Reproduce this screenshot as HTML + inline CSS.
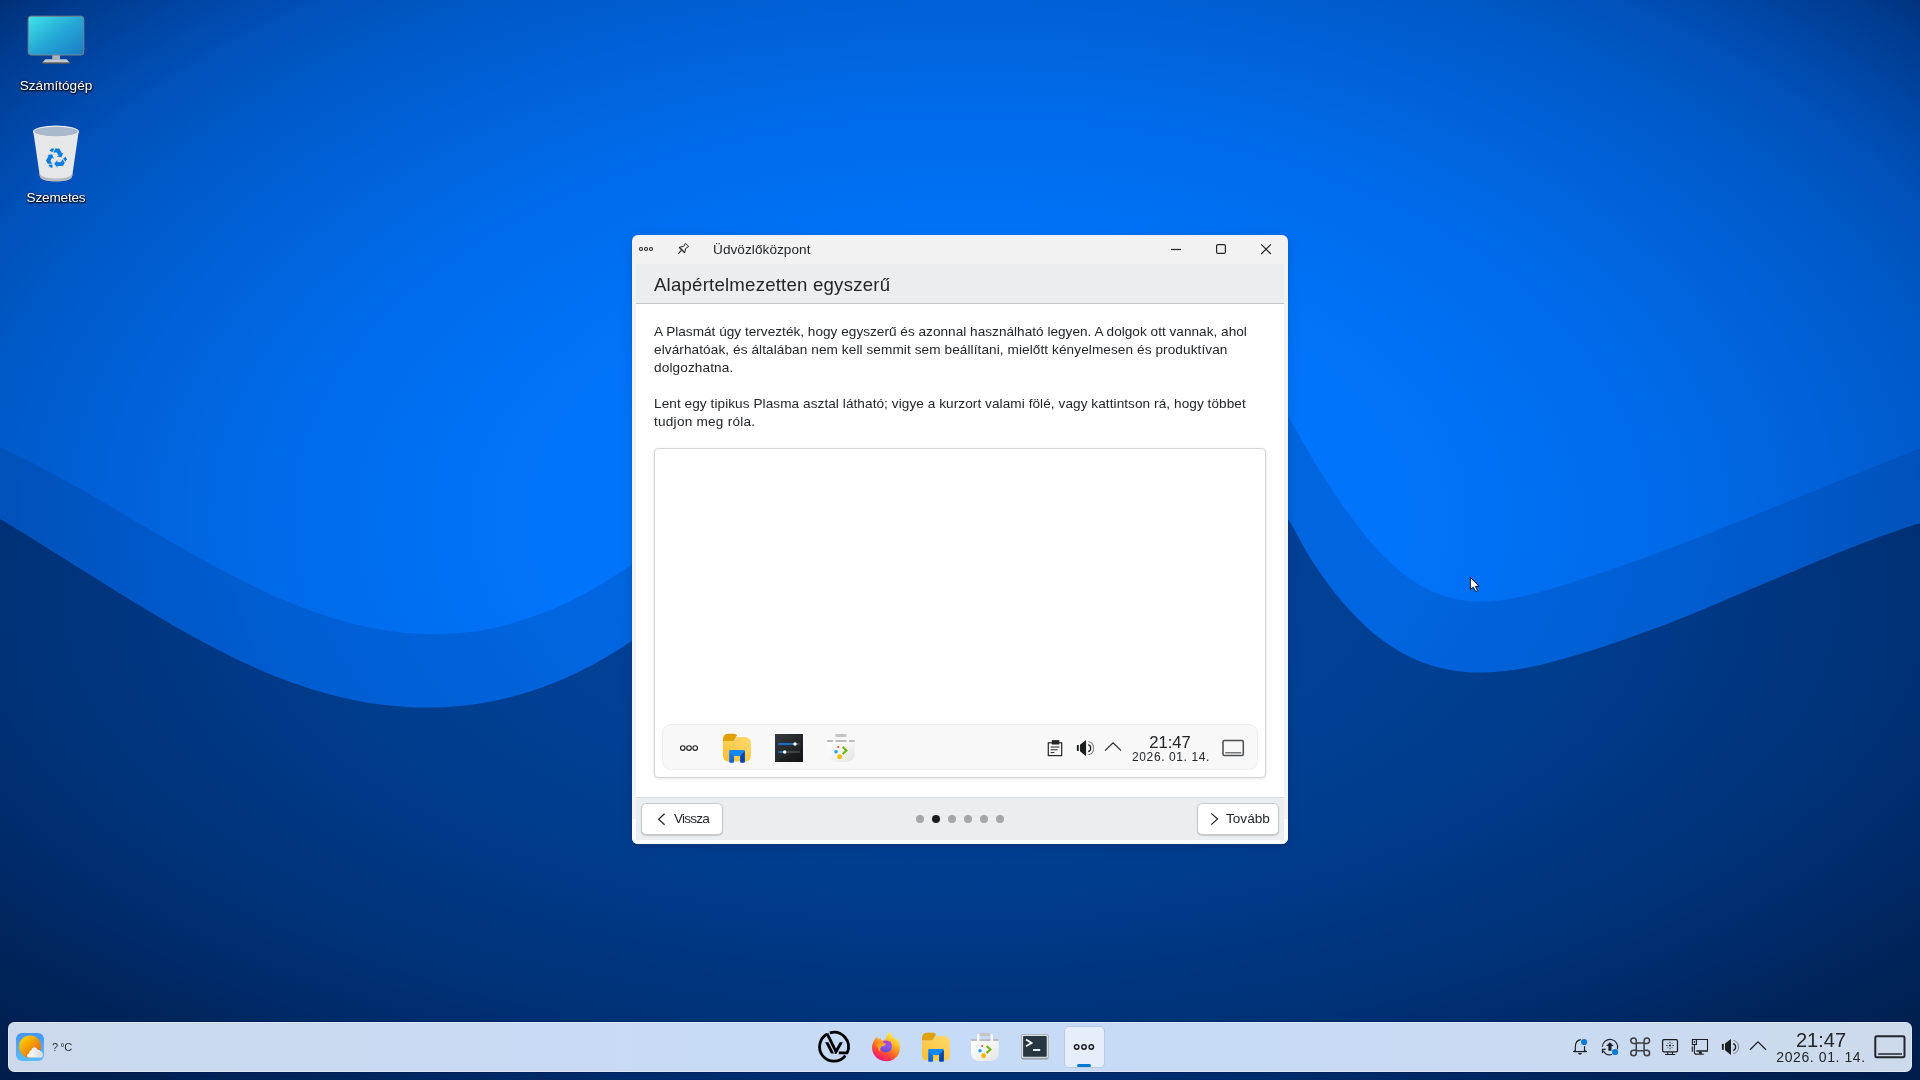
<!DOCTYPE html>
<html lang="hu">
<head>
<meta charset="utf-8">
<title>Üdvözlőközpont</title>
<style>
html,body{margin:0;padding:0;width:1920px;height:1080px;overflow:hidden;background:#003a8c;}
body{position:relative;font-family:"Liberation Sans","DejaVu Sans",sans-serif;color:#232629;-webkit-font-smoothing:antialiased;}
.abs{position:absolute;}
#wall{position:absolute;left:0;top:0;width:1920px;height:1080px;display:block;}
.dlabel{position:absolute;color:#fff;font-size:13.6px;line-height:18px;text-align:center;white-space:nowrap;text-shadow:0 1px 2px rgba(0,0,0,.9),0 0 3px rgba(0,0,0,.7),1px 1px 1px rgba(0,0,0,.6);}
/* window */
#win{position:absolute;left:632px;top:235px;width:656px;height:609px;border-radius:6px;background:#f2f2f2;box-shadow:0 3px 14px rgba(0,0,0,.10),0 1px 3px rgba(0,0,0,.10);overflow:hidden;}
#win .botfill{position:absolute;left:0;top:584px;width:656px;height:25px;background:#fdfdfd;}
#titletxt{position:absolute;left:81.2px;top:5.6px;font-size:13.6px;line-height:18px;letter-spacing:.06px;white-space:nowrap;color:#232629;}
#hdr{position:absolute;left:4px;top:29px;width:648px;height:39px;background:#eaeef1;}
#hdrline{position:absolute;left:4px;top:68px;width:648px;height:1px;background:#c4c8cb;}
#heading{position:absolute;left:22.3px;top:38px;font-size:18.6px;line-height:24px;letter-spacing:.22px;white-space:nowrap;color:#232629;}
#content{position:absolute;left:4px;top:69px;width:648px;height:493px;background:#fff;}
.ln{position:absolute;left:22.4px;font-size:13.6px;line-height:18px;white-space:nowrap;color:#232629;}
#card{position:absolute;left:22px;top:213px;width:610px;height:328px;border:1px solid #d3d4d5;border-radius:4px;background:#fff;box-shadow:0 1px 3px rgba(0,0,0,.10);}
#mpanel{position:absolute;left:30px;top:489px;width:594px;height:44px;border:1px solid #ececec;border-radius:9px;background:#f8f8f8;}
#ftline{position:absolute;left:4px;top:562px;width:648px;height:1px;background:#d9dcde;}
#footer{position:absolute;left:4px;top:563px;width:648px;height:42px;background:#eaeef1;}
.btn{position:absolute;top:568px;height:30px;border:1px solid #c6c9cb;border-radius:5px;background:#fff;box-shadow:0 1px 1px rgba(0,0,0,.16);}
.btn span{position:absolute;top:6px;font-size:13.6px;line-height:18px;white-space:nowrap;color:#232629;}
.dot{position:absolute;top:580px;width:8px;height:8px;border-radius:50%;background:#a4a8ab;}
/* bottom panel */
#panel{position:absolute;left:8px;top:1022px;width:1904px;height:50px;border-radius:6.5px;box-shadow:inset 0 0 0 1px rgba(255,255,255,.32),0 0 0 1px rgba(0,10,50,.22);background:linear-gradient(90deg,#ccd9ec 0%,#c9daf3 25%,#c6dbf7 50%,#c9daf2 78%,#cddaec 100%);}
#task{position:absolute;left:1063.5px;top:1026px;width:41px;height:41.5px;border:1px solid #bccadf;border-radius:5px;background:#e6eefb;box-sizing:border-box;}
#taskind{position:absolute;left:1077px;top:1064px;width:14px;height:3px;border-radius:1.5px;background:#0078d4;}
#temp{position:absolute;left:51.5px;top:1039px;font-size:11px;line-height:16px;letter-spacing:-.45px;white-space:nowrap;color:#2a2e32;}
#clock{position:absolute;left:1771px;top:1029px;width:100px;text-align:center;font-size:20px;line-height:22px;white-space:nowrap;color:#232629;}
#date{position:absolute;left:1761.3px;top:1048.9px;width:120px;text-align:center;font-size:14px;line-height:16px;letter-spacing:.58px;white-space:nowrap;color:#232629;}
#mclock{position:absolute;left:1120.2px;top:732.8px;width:100px;text-align:center;font-size:16.6px;line-height:20px;white-space:nowrap;color:#232629;}
#mdate{position:absolute;left:1110.5px;top:749px;width:120px;text-align:center;font-size:12px;line-height:16px;letter-spacing:.6px;white-space:nowrap;color:#232629;}
svg{overflow:visible}
.ln,#titletxt,#heading,.btn span,#temp,#clock,#date,#mclock,#mdate,.dlabel{will-change:transform;}
</style>
</head>
<body>
<!-- WALLPAPER -->
<svg id="wall" viewBox="0 0 1920 1080">
<defs>
<radialGradient id="g1" gradientUnits="userSpaceOnUse" cx="0" cy="0" r="1" gradientTransform="translate(970 520) scale(1485 880)">
<stop offset="0.0000" stop-color="#0078ff"/><stop offset="0.2909" stop-color="#0074fa"/><stop offset="0.4818" stop-color="#006ae8"/><stop offset="0.5818" stop-color="#0061d8"/><stop offset="0.6818" stop-color="#0058c4"/><stop offset="0.7364" stop-color="#0050b8"/><stop offset="0.7818" stop-color="#0047a6"/><stop offset="0.8364" stop-color="#003c90"/><stop offset="0.9000" stop-color="#002c6c"/><stop offset="1.0000" stop-color="#002358"/>
</radialGradient>
<radialGradient id="g2" gradientUnits="userSpaceOnUse" cx="0" cy="0" r="1" gradientTransform="translate(950 600) scale(1560 720)">
<stop offset="0.0000" stop-color="#0046a0"/><stop offset="0.1923" stop-color="#004298"/><stop offset="0.3846" stop-color="#003d8e"/><stop offset="0.5000" stop-color="#003783"/><stop offset="0.6154" stop-color="#003176"/><stop offset="0.6923" stop-color="#002b6a"/><stop offset="0.7692" stop-color="#00255c"/><stop offset="0.8462" stop-color="#002050"/><stop offset="0.9231" stop-color="#001c48"/><stop offset="1.0000" stop-color="#001a44"/>
</radialGradient>
</defs>
<rect width="1920" height="1080" fill="url(#g1)"/>
<path id="band" d="M0.0,447.4 C4.0,449.3 7.8,451.0 12.0,453.0 C16.2,455.0 20.3,457.0 25.0,459.3 C29.7,461.6 34.2,463.9 40.0,467.0 C45.8,470.0 51.7,473.1 60.0,477.7 C68.3,482.3 78.3,487.9 90.0,494.6 C101.7,501.3 115.0,509.2 130.0,517.9 C145.0,526.7 163.3,537.6 180.0,547.0 C196.7,556.4 213.3,565.8 230.0,574.4 C246.7,583.0 263.3,591.2 280.0,598.4 C296.7,605.5 313.3,612.0 330.0,617.2 C346.7,622.4 363.3,626.6 380.0,629.4 C396.7,632.2 413.3,633.9 430.0,634.1 C446.7,634.3 463.3,633.1 480.0,630.4 C496.7,627.7 513.3,623.5 530.0,617.8 C546.7,612.1 563.0,605.1 580.0,596.3 C597.0,587.4 602.0,584.2 632.0,564.5 C662.0,544.8 715.3,509.6 760.0,478.0 C804.7,446.4 853.3,403.8 900.0,375.0 C946.7,346.2 1000.0,317.5 1040.0,305.0 C1080.0,292.5 1111.7,295.8 1140.0,300.0 C1168.3,304.2 1190.8,317.5 1210.0,330.0 C1229.2,342.5 1242.0,360.5 1255.0,375.0 C1268.0,389.5 1278.8,403.6 1288.0,416.9 C1297.2,430.1 1302.2,441.5 1310.0,454.4 C1317.8,467.3 1326.7,481.7 1335.0,494.1 C1343.3,506.5 1351.7,518.4 1360.0,529.0 C1368.3,539.6 1376.7,549.2 1385.0,557.5 C1393.3,565.8 1401.7,572.9 1410.0,578.8 C1418.3,584.7 1425.8,589.1 1435.0,592.8 C1444.2,596.4 1454.2,599.4 1465.0,600.7 C1475.8,601.9 1487.5,601.9 1500.0,600.4 C1512.5,599.0 1525.0,596.0 1540.0,592.1 C1555.0,588.1 1571.7,582.7 1590.0,576.6 C1608.3,570.6 1630.0,563.0 1650.0,555.7 C1670.0,548.4 1690.0,540.7 1710.0,532.9 C1730.0,525.1 1750.0,517.0 1770.0,508.9 C1790.0,500.9 1811.7,492.0 1830.0,484.6 C1848.3,477.1 1868.3,469.1 1880.0,464.4 C1891.7,459.8 1894.7,458.6 1900.0,456.5 C1905.3,454.4 1908.7,453.1 1912.0,451.8 C1915.3,450.5 1917.3,449.8 1920.0,448.7 L1920,1080 L0,1080Z" fill="#002c78" fill-opacity=".20"/>
<path id="low" d="M0.0,519.0 C4.0,521.4 7.8,523.7 12.0,526.2 C16.2,528.7 20.3,531.3 25.0,534.1 C29.7,537.0 34.2,539.8 40.0,543.4 C45.8,547.0 51.7,550.7 60.0,555.9 C68.3,561.1 78.3,567.5 90.0,574.8 C101.7,582.1 115.0,590.6 130.0,599.7 C145.0,608.7 163.3,619.9 180.0,629.3 C196.7,638.7 213.3,647.8 230.0,655.9 C246.7,664.0 263.3,671.6 280.0,678.1 C296.7,684.5 313.3,690.1 330.0,694.5 C346.7,698.9 363.3,702.3 380.0,704.5 C396.7,706.7 413.3,707.8 430.0,707.6 C446.7,707.4 463.3,706.1 480.0,703.4 C496.7,700.7 513.3,696.8 530.0,691.5 C546.7,686.1 563.0,679.7 580.0,671.3 C597.0,662.9 602.0,659.9 632.0,641.0 C662.0,622.2 715.3,588.2 760.0,558.0 C804.7,527.8 853.3,487.2 900.0,460.0 C946.7,432.8 1000.0,406.3 1040.0,395.0 C1080.0,383.7 1111.7,387.0 1140.0,392.0 C1168.3,397.0 1190.8,411.2 1210.0,425.0 C1229.2,438.8 1242.0,459.3 1255.0,475.0 C1268.0,490.7 1278.8,505.5 1288.0,519.2 C1297.2,533.0 1302.2,545.1 1310.0,557.4 C1317.8,569.7 1326.7,582.4 1335.0,593.0 C1343.3,603.5 1351.7,612.7 1360.0,620.9 C1368.3,629.1 1376.7,636.0 1385.0,642.0 C1393.3,648.0 1401.7,652.9 1410.0,657.0 C1418.3,661.0 1425.8,664.0 1435.0,666.5 C1444.2,669.0 1454.2,671.1 1465.0,672.0 C1475.8,672.8 1487.5,672.8 1500.0,671.6 C1512.5,670.4 1525.0,668.3 1540.0,664.9 C1555.0,661.4 1571.7,656.9 1590.0,651.1 C1608.3,645.3 1630.0,637.7 1650.0,630.3 C1670.0,622.8 1690.0,614.6 1710.0,606.4 C1730.0,598.2 1750.0,589.5 1770.0,581.1 C1790.0,572.7 1811.7,563.5 1830.0,556.2 C1848.3,548.8 1868.3,541.2 1880.0,536.8 C1891.7,532.4 1894.7,531.6 1900.0,529.7 C1905.3,527.8 1908.7,526.8 1912.0,525.6 C1915.3,524.5 1917.3,523.9 1920.0,523.0 L1920,1080 L0,1080Z" fill="url(#g2)"/>
</svg>

<!-- DESKTOP ICONS -->
<div class="dlabel" style="left:6px;top:77px;width:100px;">Számítógép</div>
<div class="dlabel" style="left:5.8px;top:189px;width:100px;letter-spacing:-.19px">Szemetes</div>

<!-- WINDOW -->
<div id="win">
<div class="botfill"></div>
<div id="titletxt">Üdvözlőközpont</div>
<div id="hdr"></div><div id="hdrline"></div>
<div id="heading">Alapértelmezetten egyszerű</div>
<div id="content"></div>
<div class="ln" style="top:87.6px;letter-spacing:.02px">A Plasmát úgy tervezték, hogy egyszerű és azonnal használható legyen. A dolgok ott vannak, ahol</div>
<div class="ln" style="top:105.6px;letter-spacing:.09px">elvárhatóak, és általában nem kell semmit sem beállítani, mielőtt kényelmesen és produktívan</div>
<div class="ln" style="top:123.6px;letter-spacing:.13px">dolgozhatna.</div>
<div class="ln" style="top:159.6px;letter-spacing:.07px">Lent egy tipikus Plasma asztal látható; vigye a kurzort valami fölé, vagy kattintson rá, hogy többet</div>
<div class="ln" style="top:177.6px;letter-spacing:.24px">tudjon meg róla.</div>
<div id="card"></div>
<div id="mpanel"></div>
<div id="ftline"></div><div id="footer"></div>
<div class="btn" style="left:9px;width:80px;"><span style="left:32px;letter-spacing:-.78px">Vissza</span></div>
<div class="btn" style="left:565px;width:80px;"><span style="left:28.2px">Tovább</span></div>
<div class="dot" style="left:284px"></div>
<div class="dot" style="left:300px;background:#1b1e20"></div>
<div class="dot" style="left:316px"></div>
<div class="dot" style="left:332px"></div>
<div class="dot" style="left:348px"></div>
<div class="dot" style="left:364px"></div>
</div>
<div id="mclock">21:47</div>
<div id="mdate">2026. 01. 14.</div>

<!-- PANEL -->
<div id="panel"></div>
<div id="task"></div><div id="taskind"></div>
<div id="temp">? °C</div>
<div id="clock">21:47</div>
<div id="date">2026. 01. 14.</div>
<svg id="ov" class="abs" style="left:0;top:0" width="1920" height="1080" viewBox="0 0 1920 1080">
<defs>
<linearGradient id="fold" x1="0" y1="1" x2="1" y2="0"><stop offset="0" stop-color="#ffbf30"/><stop offset="1" stop-color="#ffd96e"/></linearGradient>
<linearGradient id="gateL" x1="0" y1="0" x2="0" y2="1"><stop offset="0" stop-color="#0f84ff"/><stop offset="1" stop-color="#0a5fd0"/></linearGradient>
<linearGradient id="bag" x1="0" y1="0" x2="1" y2="1"><stop offset="0" stop-color="#ffffff"/><stop offset=".45" stop-color="#f6f6f6"/><stop offset="1" stop-color="#e4e4e4"/></linearGradient>
<linearGradient id="sett" x1="0" y1="0" x2="1" y2="1"><stop offset="0" stop-color="#34383c"/><stop offset="1" stop-color="#17191b"/></linearGradient>
<linearGradient id="wbg" x1="0" y1="0" x2="0" y2="1"><stop offset="0" stop-color="#4596ff"/><stop offset="1" stop-color="#5cbcff"/></linearGradient>
<linearGradient id="sun" x1="0.15" y1="0.1" x2="0.85" y2="0.9"><stop offset="0" stop-color="#ffcf00"/><stop offset="1" stop-color="#e86200"/></linearGradient>
<linearGradient id="cloud" x1="0" y1="0" x2="1" y2="0"><stop offset="0" stop-color="#ffffff"/><stop offset="1" stop-color="#d9d9d9"/></linearGradient>
<linearGradient id="scr" x1="0" y1="0" x2="1" y2="1"><stop offset="0" stop-color="#42e4ea"/><stop offset=".5" stop-color="#24a8d6"/><stop offset="1" stop-color="#1a7cc6"/></linearGradient>
<linearGradient id="ffb" x1="0.8" y1="0.05" x2="0.3" y2="1"><stop offset="0" stop-color="#fff44f"/><stop offset=".3" stop-color="#ffbd2e"/><stop offset=".55" stop-color="#ff7a1f"/><stop offset=".8" stop-color="#ff3647"/><stop offset="1" stop-color="#e31587"/></linearGradient>
<linearGradient id="ffg" x1="0.6" y1="0" x2="0.35" y2="1"><stop offset="0" stop-color="#b833e1"/><stop offset=".45" stop-color="#9059ff"/><stop offset="1" stop-color="#5b49c8"/></linearGradient>
<linearGradient id="ffs" x1="0" y1="0" x2="1" y2="0.6"><stop offset="0" stop-color="#ff8a16"/><stop offset="1" stop-color="#ffb628"/></linearGradient>
<!-- folder 40-box -->
<g id="folder">
<path d="M8,13.5 V11.2 Q8,5.7 13.5,5.7 H19.2 Q21.2,5.7 22,7.2 L18.4,13.6Z" fill="#e0a000"/>
<path d="M8,13.4 H17.2 Q18.6,13.4 19.4,12.2 L20.6,10.2 Q21.4,9 22.8,9 H29.4 Q36,9 36,15.6 V27.4 Q36,33.6 29.8,33.6 H14.2 Q8,33.6 8,27.4Z" fill="url(#fold)"/>
<path d="M14.2,23 Q14.2,22 15.2,22 H28.9 Q29.9,22 29.9,23 L25.1,27.9 H19Z" fill="#1188ff"/>
<path d="M14.2,22.8 L19,27.7 V33.8 Q19,34.8 18,34.8 H15.2 Q14.2,34.8 14.2,33.8Z" fill="url(#gateL)"/>
<path d="M29.9,22.8 L25.1,27.7 V33.8 Q25.1,34.8 26.1,34.8 H28.9 Q29.9,34.8 29.9,33.8Z" fill="#0043b4"/>
</g>
<!-- discover 40-box -->
<g id="disc">
<rect x="15" y="6.1" width="11.7" height="2.8" rx=".6" fill="#c4c4c4"/>
<path d="M13,14.5 V8.8 Q13,7 15.5,6.6 V14.5Z M29,14.5 V8.8 Q29,7 26.5,6.6 V14.5Z" fill="#f6f6f6"/>
<path d="M7,12 H34.8 V25.6 Q34.8,33.9 26.4,33.9 H15.4 Q7,33.9 7,25.6Z" fill="url(#bag)"/>
<path d="M7,12 H13 V14 H7Z M15.5,12 H26.5 V14 H15.5Z M29,12 H34.8 V14 H29Z" fill="#bdbdbd"/>
<rect x="17.3" y="18" width="1.9" height="2" rx=".4" fill="#f05a3c"/>
<circle cx="16" cy="23.7" r="1.75" fill="#1e9eff"/>
<circle cx="19.6" cy="28.8" r="2.45" fill="#ffb400"/>
<path d="M22.6,19 L26.4,22.5 L22.6,26" fill="none" stroke="#6eb400" stroke-width="2.1"/>
</g>
</defs>
<!-- ===== bottom panel: weather ===== -->
<g>
<rect x="16" y="1033" width="28" height="28" rx="6" fill="url(#wbg)"/>
<circle cx="30" cy="1046.6" r="11" fill="url(#sun)"/>
<path d="M28.8,1057.6 Q27,1057.6 27,1055.6 Q27,1053.8 29,1053.4 Q29.4,1050.8 31.4,1050 Q32,1047.4 34.4,1047.2 Q37,1047.2 37.8,1049.8 Q39.6,1049.4 40.4,1051.2 Q42.8,1051.4 43,1054.4 Q43,1057.6 40.6,1057.6Z" fill="url(#cloud)"/>
</g>
<!-- launcher logo (40-box at 814,1027) -->
<g transform="translate(814 1027)" fill="none" stroke="#000" stroke-width="2.8">
<path d="M13.22,6.99 A14.45,14.45 0 1 0 31.39,28.65"/>
<path d="M15.78,5.93 A14.45,14.45 0 0 1 33.10,25.86 H24.8"/>
<path d="M13.1,6.6 L22.25,25.2" stroke-linecap="butt"/>
<path d="M20.55,27.1 L22.3,27.1 L28.9,15.2 L25.7,15.2 L21.0,23.6Z" fill="#000" stroke="none"/>
<path d="M11.2,15.2 H14.4 L20.1,26.6 H16.9Z" fill="#000" stroke="none"/>
</g>
<!-- firefox (40-box at 864,1027) -->
<g transform="translate(864 1027)">
<path d="M12.6,9.8 Q13.6,11.8 14.6,12.6 Q15.4,11.4 16.4,10.8 Q16.8,12.6 18,13.8 Q19.6,12.8 21.6,12.6 Q22,7.6 26.2,4.9 Q27,8.4 30.2,11.6 Q31.6,12.4 32.4,11.2 Q33.6,12.2 34.4,14.2 Q36.2,17.6 36,21.4 Q35.4,28.8 29.4,32.4 Q24.4,35.2 18.6,33.8 Q12.4,32.2 9.4,26.4 Q6.8,21 9,15.4 Q10.2,12.4 12.6,9.8Z" fill="url(#ffb)"/>
<circle cx="22" cy="19.4" r="6" fill="url(#ffg)"/>
<path d="M11.8,17.4 Q13.6,16 16.6,16.4 Q17.2,15 18.2,14.2 Q20,16.4 22.2,17.1 Q21.4,18.6 19.2,19 Q16.8,19.4 16,21.4 Q15.4,23 16.2,25 Q14.2,23.4 14,20.4 Q12.6,19.2 11.8,17.4Z" fill="url(#ffs)"/>
<path d="M25.6,14.4 Q27.2,14.8 27.8,15.8 Q26.4,15.4 25,15.8Z" fill="#b833e1"/>
</g>
<use href="#folder" x="914" y="1027"/>
<use href="#disc" x="964" y="1027"/>
<!-- konsole (40-box at 1014,1027) -->
<g transform="translate(1014 1027)">
<rect x="7.3" y="7.6" width="27.2" height="24.8" rx="1.6" fill="#8e979d"/>
<rect x="7.3" y="7.3" width="27.2" height="24" rx="1.6" fill="#aab2b8"/>
<rect x="7.9" y="7.9" width="26" height="22.8" rx="1.2" fill="#dfe3e6"/>
<rect x="9.1" y="9.1" width="23.6" height="20.6" rx=".8" fill="#263742"/>
<path d="M12,12.6 L17.6,15.9 L12,19.2" fill="none" stroke="#fff" stroke-width="1.7" stroke-linejoin="miter"/>
<rect x="19" y="22.1" width="7.2" height="1.8" fill="#fff"/>
</g>
<!-- active task dots -->
<g fill="none" stroke="#1b1e20" stroke-width="1.45">
<circle cx="1076.7" cy="1047" r="2.2"/><circle cx="1084" cy="1047" r="2.2"/><circle cx="1091.3" cy="1047" r="2.2"/>
</g>
<!-- ===== systray ===== -->
<g fill="none" stroke="#1b1e20" stroke-width="1.15">
<!-- bell -->
<path d="M1575.3,1051.2 V1046.4 Q1575.5,1040.5 1580.8,1039.6"/>
<path d="M1584.5,1046.2 V1051.2"/>
<path d="M1573.2,1051.6 H1587" stroke-width="1.2"/>
<path d="M1573.6,1051.4 L1575.4,1049.9 V1051.4Z M1586.6,1051.4 L1584.4,1049.9 V1051.4Z" fill="#1b1e20" stroke-width=".5"/>
<path d="M1577.9,1053.1 H1582.1 Q1581.2,1054.8 1580,1054.8 Q1578.8,1054.8 1577.9,1053.1Z" fill="#1b1e20" stroke="none"/>
<!-- updates -->
<path d="M1602.31,1046.70 A7.7,7.7 0 1 1 1617.40,1049.22"/>
<path d="M1612.12,1054.50 A7.7,7.7 0 0 1 1603.33,1050.95"/>
<path d="M1602.5,1052.9 V1049.4 H1605.7" stroke-width="1.3"/>
<path d="M1609.9,1042.2 L1613.7,1045.9 H1611.5 V1050.8 H1608.4 V1045.9 H1606.1Z" fill="#1b1e20" stroke="none"/>
<!-- display brightness -->
<rect x="1662.6" y="1039.6" width="14.9" height="12.2" rx="1.3" stroke-width="1.25"/>
<path d="M1667.8,1052 V1054.4 M1672.4,1052 V1054.4 M1665,1054.5 H1675.2" stroke-width="1.1"/>
<!-- chevron -->
<path d="M1750,1049.8 L1758,1041.9 L1766,1049.8" stroke-width="1.2"/>
</g>
<circle cx="1584.1" cy="1042" r="3.1" fill="#0a7ad6"/>
<circle cx="1615.1" cy="1052" r="3.1" fill="#0a7ad6"/>
<!-- command symbol -->
<path d="M1636.3,1042.9 H1644.1 V1050.7 H1636.3Z M1636.3,1042.9 V1040.7 A2.75,2.75 0 1 0 1633.55,1043.45 H1636.3 M1644.1,1042.9 V1040.7 A2.75,2.75 0 1 1 1646.85,1043.45 H1644.1 M1636.3,1050.7 V1052.9 A2.75,2.75 0 1 1 1633.55,1050.15 H1636.3 M1644.1,1050.7 V1052.9 A2.75,2.75 0 1 0 1646.85,1050.15 H1644.1" fill="none" stroke="#3a3e42" stroke-width="1.5" transform="translate(0 0)"/>
<!-- brightness sun -->
<g stroke="#33373b" stroke-width="1" fill="none">
<circle cx="1670" cy="1045.5" r="1.1" fill="#1b1e20" stroke="none"/>
<path d="M1670,1041.6 V1043.2 M1670,1047.8 V1049.4 M1666.1,1045.5 H1667.7 M1672.3,1045.5 H1673.9 M1667.3,1042.8 L1668.3,1043.8 M1671.7,1047.2 L1672.7,1048.2 M1672.7,1042.8 L1671.7,1043.8 M1668.3,1047.2 L1667.3,1048.2"/>
</g>
<!-- network wired -->
<g fill="none" stroke="#1b1e20" stroke-width="1.1">
<path d="M1696.6,1039.5 H1707.5 V1050.6"/>
<path d="M1696.3,1051 H1708" stroke-width="1.5"/>
<path d="M1698.8,1051.6 H1701.8 V1053.8 H1698.8Z" fill="#1b1e20" stroke="none"/>
<path d="M1696.2,1054.2 H1703.8" stroke-width="1.1"/>
<rect x="1692.4" y="1039.5" width="4" height="5" />
<rect x="1693.9" y="1041" width="1.1" height="1.8" fill="#1b1e20" stroke="none"/>
<path d="M1694.4,1044.6 V1052.2 Q1694.4,1054.2 1696.6,1054.2"/>
<path d="M1692.3,1046.4 V1051.8"/>
</g>
<!-- volume -->
<g id="vol">
<rect x="1721.9" y="1043.9" width="1.9" height="5.9" fill="#1b1e20"/>
<path d="M1725,1043.6 L1731,1038.9 V1055.1 L1725,1050.2Z" fill="#1b1e20"/>
<path d="M1733.2,1043.6 A3.6,3.6 0 0 1 1733.2,1050.4" fill="none" stroke="#1b1e20" stroke-width="1.3"/>
<path d="M1733.4,1040.4 A6.8,6.8 0 0 1 1733.4,1053.6" fill="none" stroke="#7d8287" stroke-width="1"/>
</g>
<!-- show desktop -->
<rect x="1875.3" y="1036.3" width="29.2" height="21" rx="1.4" fill="none" stroke="#232629" stroke-width="2"/>
<path d="M1878.2,1054 H1902" stroke="#232629" stroke-width="1.5"/>
<!-- ===== titlebar ===== -->
<g fill="none" stroke="#232629" stroke-width="1.05">
<circle cx="641" cy="249" r="1.55"/><circle cx="646" cy="249" r="1.55"/><circle cx="651" cy="249" r="1.55"/>
<path d="M678.3,253.6 L681.4,250.4" stroke-width="1.2"/>
<path d="M679.3,247.3 L683.7,246.3 L685.5,243.3 L688.7,246.5 L685.7,248.4 L684.7,252.7" stroke-width="1"/>
<path d="M679.2,247.2 L684.8,252.8" stroke-width="1.4"/>
<path d="M1171,249.5 H1181" stroke-width="1.2"/>
<rect x="1216.6" y="244.6" width="8.8" height="8.8" rx="1.5" stroke-width="1.2"/>
<path d="M1261.2,244.3 L1270.9,254 M1270.9,244.3 L1261.2,254" stroke-width="1.15"/>
<!-- button chevrons -->
<path d="M664.6,813.7 L658.6,819.2 L664.6,824.7" stroke-width="1.2"/>
<path d="M1211.2,813.4 L1217.6,819 L1211.2,824.6" stroke-width="1.2"/>
</g>
<!-- ===== mock panel ===== -->
<g fill="none" stroke="#232629" stroke-width="1.15">
<circle cx="682.8" cy="748" r="2.3"/><circle cx="689" cy="748" r="2.3"/><circle cx="695.2" cy="748" r="2.3"/>
</g>
<use href="#folder" x="715" y="728"/>
<g>
<rect x="775" y="734" width="28" height="28" fill="url(#sett)"/>
<path d="M775,762 L803,762 L803,748Z" fill="#000" fill-opacity=".18"/>
<path d="M778.3,744 H795" stroke="#1a7fe8" stroke-width="1.6"/><path d="M795,744 H799.8" stroke="#55595d" stroke-width="1.3"/>
<path d="M778.3,752 H784.7" stroke="#1a7fe8" stroke-width="1.6"/><path d="M784.7,752 H799.8" stroke="#55595d" stroke-width="1.3"/>
<circle cx="795" cy="744" r="1.8" fill="#fff"/><circle cx="784.7" cy="752" r="1.8" fill="#fff"/>
</g>
<use href="#disc" x="820" y="728"/>
<!-- clipboard -->
<g fill="none" stroke="#232629" stroke-width="1.2">
<rect x="1048.3" y="742.8" width="13.4" height="12.8"/>
<path d="M1050.6,747 H1059.4 M1050.6,749.8 H1057.6 M1050.6,752.6 H1054.4" stroke-width="1"/>
<path d="M1051.8,744.5 V740.1 H1059.3 V744.5Z" fill="#232629" stroke="none"/>
</g>
<!-- mock volume -->
<g transform="translate(1076.9 740) scale(1.006) translate(-1721.9 -1038.9)"><use href="#vol"/></g>
<path d="M1105,750.6 L1113.1,742.8 L1121.1,750.6" fill="none" stroke="#232629" stroke-width="1.2"/>
<rect x="1223" y="740.5" width="20.3" height="15" rx="1.2" fill="none" stroke="#4a4e52" stroke-width="1.5"/>
<path d="M1225.2,752.8 H1241.2" stroke="#4a4e52" stroke-width="1.1"/>
<!-- ===== desktop icons ===== -->
<g>
<rect x="52.2" y="55" width="7.8" height="4.4" fill="#a9b1b9"/>
<path d="M45.4,59.2 H66.6 L70,63 H42Z" fill="#c3c9cf"/>
<rect x="42" y="62.4" width="28" height="1.5" fill="#4e545a"/>
<rect x="28.2" y="16.2" width="55.6" height="38.8" rx="3" fill="url(#scr)" stroke="#7d848b" stroke-width="1"/>
</g>
<g>
<path d="M33.3,131.5 L39.8,176 Q41,181.3 56,181.3 Q71,181.3 72.2,176 L78.7,131.5Z" fill="#e5e7e9"/>
<path d="M39.4,173.5 L39.8,176 Q41,181.3 56,181.3 Q71,181.3 72.2,176 L72.6,173.5 Q70,178.6 56,178.6 Q42,178.6 39.4,173.5Z" fill="#b9bbbd"/>
<ellipse cx="56" cy="131.5" rx="22.5" ry="5.4" fill="#a9b8cb" stroke="#e9ebed" stroke-width="1.1"/>
<g id="rcy" transform="translate(56 158.4)" fill="#0a7ce0">
<g id="arr"><path d="M-0.6,-9.8 H3.2 L6,-5 L7.4,-5.9 L5.6,-1.2 L0.6,-2 L2.6,-3 L0.8,-6 H-2.6Z"/><path d="M-1.8,-9.8 L-3.4,-6.2 L-6.4,-7.6 L-4.6,-9.8Z" transform="translate(0 0)"/></g>
<use href="#arr" transform="rotate(120)"/><use href="#arr" transform="rotate(240)"/>
</g>
</g>
<!-- cursor -->
<path d="M1470.3,577.2 V589.6 L1473.3,587.2 L1475.8,591.6 L1477.7,590.6 L1475.4,586.5 L1479,586.2Z" fill="#fff" stroke="#000c28" stroke-width="1" stroke-linejoin="round"/>
</svg>

</body>
</html>
